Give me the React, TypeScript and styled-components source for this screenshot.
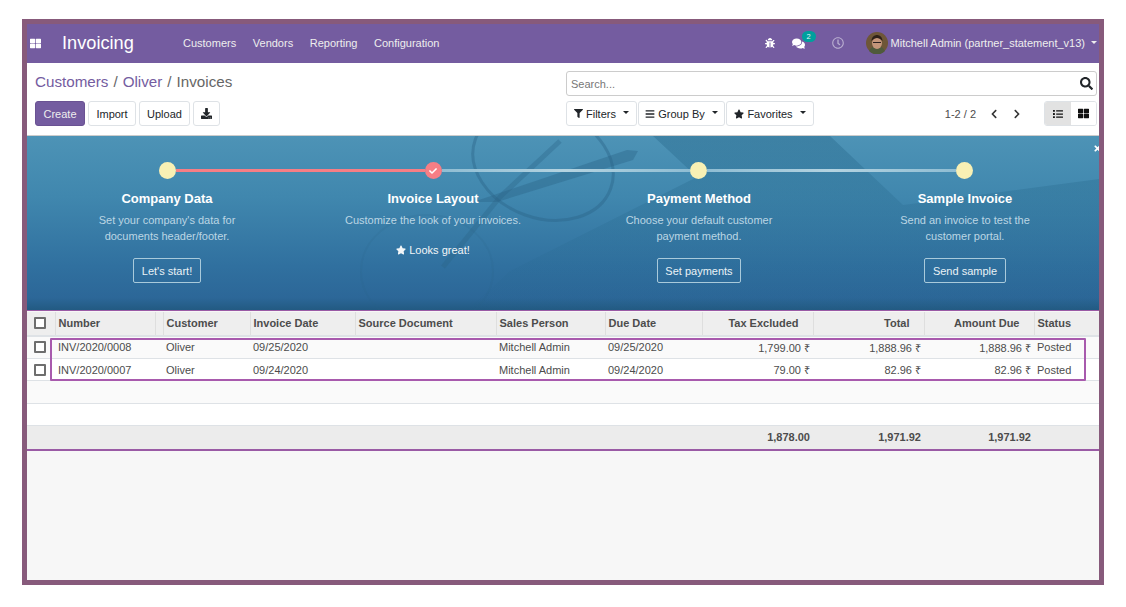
import styled, { createGlobalStyle } from 'styled-components';
import {
  FaBars, FaBug, FaChevronLeft, FaChevronRight, FaComments, FaDownload, FaFilter,
  FaList, FaRegClock, FaSearch, FaStar, FaThLarge, FaCheck, FaTimes
} from 'react-icons/fa';

// Styles
const GlobalStyle = createGlobalStyle`
  html, body {
    margin: 0;
    background: #fff;
  }
  body {
    font-family: "Liberation Sans", Arial, sans-serif;
    font-size: 11px;
    color: #4c4c4c;
  }
`;

const Page = styled.div`
  padding: 19px 22px;
  width: 1126px;
  height: 607px;
  box-sizing: border-box;
`;

const Frame = styled.div`
  width: 1082px;
  height: 566px;
  box-sizing: border-box;
  border: 5px solid #875a7b;
  background: #f7f7f7;
  display: flex;
  flex-direction: column;
  overflow: hidden;
`;

// Navbar
const Navbar = styled.div`
  height: 39px;
  flex: none;
  background: #745ca0;
  color: #fff;
  display: flex;
  align-items: center;
  padding: 0 2px 1px 3px;
  box-sizing: border-box;
`;

const AppName = styled.div`
  font-size: 18.2px;
  margin: 1px 48px 0 21px;
  width: 73px;
`;

const NavLink = styled.div`
  font-size: 11px;
  color: #eee;
  margin-right: 16.6px;
`;

const NavRight = styled.div`
  margin-left: auto;
  display: flex;
  align-items: center;
`;

const NavIcon = styled.div<{ $width: number }>`
  width: ${p => p.$width}px;
  display: flex;
  align-items: center;
  position: relative;
  color: #fff;
`;

const Badge = styled.span`
  position: absolute;
  left: 10px;
  top: -6px;
  width: 14px;
  height: 11px;
  line-height: 11px;
  border-radius: 6px;
  background: #00a09d;
  color: #e8f6f5;
  font-size: 7.500px;
  text-align: center;
`;

const Avatar = styled.svg`
  width: 22px;
  height: 22px;
  margin-right: 3px;
`;

const UserName = styled.div`
  font-size: 11px;
  color: #eee;
`;

const Caret = styled.span<{ $color?: string }>`
  display: inline-block;
  border-top: 3.5px solid ${p => p.$color || '#eee'};
  border-left: 3.5px solid transparent;
  border-right: 3.5px solid transparent;
`;

// Control panel
const ControlPanel = styled.div`
  height: 73px;
  flex: none;
  box-sizing: border-box;
  background: #fff;
  border-bottom: 1px solid #ccc;
  padding: 8px 2px 0 8px;
  display: grid;
  grid-template-columns: 531px 531px;
  grid-template-rows: 25px 25px;
  row-gap: 5px;
`;

const Breadcrumb = styled.div`
  font-size: 15.2px;
  line-height: 22px;
  color: #666;
  display: flex;
  gap: 5px;
`;

const Crumb = styled.span`
  color: #745ca0;
`;

const SearchBox = styled.div`
  border: 1px solid #ccc;
  border-radius: 3px;
  display: flex;
  align-items: center;
  justify-content: space-between;
  padding: 0 3px 0 4px;
  font-size: 11px;
  color: #212529;
`;

const SearchHint = styled.span`
  color: #777;
`;

const ButtonRow = styled.div`
  display: flex;
  gap: 3px;
`;

const Button = styled.div<{ $primary?: boolean; $width: number }>`
  width: ${p => p.$width}px;
  height: 25px;
  box-sizing: border-box;
  display: flex;
  align-items: center;
  justify-content: center;
  gap: 3px;
  border-radius: 3px;
  font-size: 11px;
  color: ${p => (p.$primary ? '#eee' : '#212529')};
  background: ${p => (p.$primary ? '#745ca0' : '#fff')};
  border: 1px solid ${p => (p.$primary ? '#6a5293' : '#dee2e6')};
`;

const SearchOptions = styled.div`
  display: flex;
  align-items: center;
`;

const FilterButton = styled(Button)`
  margin-right: 1px;
`;

const CaretGap = styled.span<{ $gap?: number }>`
  display: flex;
  margin: -2px 0 0 ${p => p.$gap || 4}px;
`;

const Pager = styled.div`
  margin-left: auto;
  display: flex;
  align-items: center;
  font-size: 11px;
  color: #4c4c4c;
`;

const PagerArrows = styled.div`
  display: flex;
  gap: 13px;
  margin: 0 22px 0 13px;
  color: #333;
`;

const ViewSwitch = styled.div`
  display: flex;
  width: 53px;
  height: 25px;
  border: 1px solid #dee2e6;
  border-radius: 3px;
  box-sizing: border-box;
  overflow: hidden;
`;

const ViewOption = styled.div<{ $active?: boolean }>`
  flex: 1;
  display: flex;
  align-items: center;
  justify-content: center;
  color: #111;
  background: ${p => (p.$active ? '#e2e2e2' : '#fff')};
`;

// Onboarding banner
const Banner = styled.div`
  position: relative;
  height: 175px;
  flex: none;
  box-sizing: border-box;
  overflow: hidden;
  border-bottom: 1px solid #9a5ba5;
  background: linear-gradient(180deg, #4d93b6 0%, #4087ae 35%, #30709f 75%, #2c6798 93%, #225a82 100%);
`;

const BannerArt = styled.svg`
  position: absolute;
  left: 0;
  top: 0;
  width: 100%;
  height: 100%;
`;

const CloseIcon = styled.div`
  position: absolute;
  right: -3px;
  top: 8px;
  color: #fff;
  font-size: 9px;
`;

const Track = styled.div`
  position: relative;
  display: flex;
  align-items: center;
  padding: 26px 126px 0 132px;
`;

const Dot = styled.div<{ $done?: boolean }>`
  width: 17px;
  height: 17px;
  flex: none;
  border-radius: 50%;
  background: ${p => (p.$done ? '#f67e85' : '#f8f0b4')};
  color: #fff;
  font-size: 8px;
  display: flex;
  align-items: center;
  justify-content: center;
`;

const Line = styled.div<{ $done?: boolean }>`
  flex: 1;
  height: 3px;
  background: ${p => (p.$done ? '#f67e85' : 'linear-gradient(90deg, #8fbdd3, #b4d3e0 50%, #8fbdd3)')};
`;

const Steps = styled.div`
  position: relative;
  display: grid;
  grid-template-columns: repeat(4, 266px);
  padding: 11px 0 0 7px;
`;

const Step = styled.div`
  display: flex;
  flex-direction: column;
  align-items: center;
  text-align: center;
`;

const StepTitle = styled.div`
  color: #fff;
  font-size: 13px;
  font-weight: 700;
  line-height: 18px;
  margin-bottom: 4px;
`;

const StepText = styled.div`
  color: #bcd6e4;
  font-size: 11px;
  line-height: 16px;
`;

const StepButton = styled.div`
  margin-top: 14px;
  height: 25px;
  box-sizing: border-box;
  padding: 0 7.500px;
  display: flex;
  align-items: center;
  border: 1px solid #a9cadb;
  border-radius: 2px;
  color: #eaf2f6;
  font-size: 11px;
`;

const Done = styled.div`
  margin-top: 15px;
  color: #f2f6f8;
  font-size: 11px;
  line-height: 14px;
  display: flex;
  align-items: center;
  gap: 3px;
`;

// List view
const ListWrap = styled.div`
  position: relative;
  margin-top: 1px;
  flex: none;
  background: #fff;
  border-bottom: 2px solid #9a5ba5;
`;

const Table = styled.table`
  width: 1072px;
  table-layout: fixed;
  border-collapse: collapse;
  font-size: 11px;
`;

const HeadCell = styled.th<{ $width: number; $right?: boolean }>`
  width: ${p => p.$width}px;
  height: 24px;
  box-sizing: border-box;
  padding: ${p => (p.$right ? '0 14px 2px 3px' : '0 3px 2px')};
  background: #eee;
  border-right: 1px solid #dedede;
  border-bottom: 2px solid #dee2e6;
  color: #4c4c4c;
  font-weight: 700;
  text-align: ${p => (p.$right ? 'right' : 'left')};
  white-space: nowrap;
`;

const Row = styled.tr<{ $odd?: boolean }>`
  height: 22.4px;
  background: ${p => (p.$odd ? '#fafafa' : '#fff')};
  border-bottom: 1px solid #dee2e6;
`;

const Cell = styled.td<{ $right?: boolean }>`
  padding: 0 3px;
  color: #4c4c4c;
  text-align: ${p => (p.$right ? 'right' : 'left')};
  white-space: nowrap;
`;

const FootRow = styled.tr`
  height: 23px;
  background: #ececec;
`;

const FootCell = styled(Cell)`
  font-weight: 700;
`;

const CheckCell = styled(Cell)`
  padding: 0 0 0 7px;
`;

const CheckBox = styled.div`
  width: 12px;
  height: 12px;
  box-sizing: border-box;
  border: 2px solid #6e6e6e;
  border-radius: 1px;
  background: #fff;
`;

const HeadCheckCell = styled(HeadCell)`
  padding-left: 7px;
`;

const Highlight = styled.div`
  position: absolute;
  left: 23px;
  top: 26px;
  width: 1036px;
  height: 43px;
  box-sizing: border-box;
  border: 2px solid #a85aad;
  border-radius: 1px;
  pointer-events: none;
`;

const Filler = styled.div`
  flex: 1;
  background: #f7f7f7;
`;

const columns = [
  { label: 'Number', width: 100 },
  { label: '', width: 8 },
  { label: 'Customer', width: 87 },
  { label: 'Invoice Date', width: 105 },
  { label: 'Source Document', width: 141 },
  { label: 'Sales Person', width: 109 },
  { label: 'Due Date', width: 97 },
  { label: 'Tax Excluded', width: 111, right: true },
  { label: 'Total', width: 111, right: true },
  { label: 'Amount Due', width: 110, right: true },
  { label: 'Status', width: 65 }
];

const invoices = [
  {
    number: 'INV/2020/0008', date: '09/25/2020', tax: '1,799.00 ₹', total: '1,888.96 ₹', due: '1,888.96 ₹'
  },
  {
    number: 'INV/2020/0007', date: '09/24/2020', tax: '79.00 ₹', total: '82.96 ₹', due: '82.96 ₹'
  }
];

const steps = [
  { title: 'Company Data', text: ["Set your company's data for", 'documents header/footer.'], action: "Let's start!" },
  { title: 'Invoice Layout', text: ['Customize the look of your invoices.'] },
  { title: 'Payment Method', text: ['Choose your default customer', 'payment method.'], action: 'Set payments' },
  { title: 'Sample Invoice', text: ['Send an invoice to test the', 'customer portal.'], action: 'Send sample' }
];

const App = () => (
  <Page>
    <GlobalStyle />
    <Frame>
      <Navbar>
        <FaThLarge size={11} />
        <AppName>Invoicing</AppName>
        <NavLink>Customers</NavLink>
        <NavLink>Vendors</NavLink>
        <NavLink>Reporting</NavLink>
        <NavLink>Configuration</NavLink>
        <NavRight>
          <NavIcon $width={27}><FaBug size={10} /></NavIcon>
          <NavIcon $width={40}>
            <FaComments size={13} />
            <Badge>2</Badge>
          </NavIcon>
          <NavIcon $width={34}><FaRegClock size={12} color='#b9aed0' /></NavIcon>
          <Avatar viewBox='0 0 22 22'>
            <circle cx='11' cy='11' r='11' fill='#6e5638' />
            <path d='M3 19c2-4 5-5 8-5s6 1 8 5a11 11 0 0 1-16 0z' fill='#4f5a3c' />
            <ellipse cx='11' cy='11' rx='5' ry='6' fill='#c4957a' />
            <path d='M5.500 9c0-4 3-6 5.500-6s5.500 2 5.500 6c-2-2-4-3-5.500-3S7.500 7 5.500 9z' fill='#2e2119' />
            <rect x='7' y='10' width='8' height='1' fill='#2a2020' />
          </Avatar>
          <UserName>Mitchell Admin (partner_statement_v13)</UserName>
          <CaretGap $gap={6}><Caret /></CaretGap>
        </NavRight>
      </Navbar>

      <ControlPanel>
        <Breadcrumb>
          <Crumb>Customers</Crumb>/<Crumb>Oliver</Crumb>/<span>Invoices</span>
        </Breadcrumb>
        <SearchBox>
          <SearchHint>Search...</SearchHint>
          <FaSearch size={13} />
        </SearchBox>
        <ButtonRow>
          <Button $primary $width={50}>Create</Button>
          <Button $width={48}>Import</Button>
          <Button $width={51}>Upload</Button>
          <Button $width={27}><FaDownload size={11} /></Button>
        </ButtonRow>
        <SearchOptions>
          <FilterButton $width={71}>
            <FaFilter size={9} />Filters<CaretGap><Caret $color='#212529' /></CaretGap>
          </FilterButton>
          <FilterButton $width={87}>
            <FaBars size={10} />Group By<CaretGap><Caret $color='#212529' /></CaretGap>
          </FilterButton>
          <FilterButton $width={88}>
            <FaStar size={10} />Favorites<CaretGap><Caret $color='#212529' /></CaretGap>
          </FilterButton>
          <Pager>
            1-2 / 2
            <PagerArrows>
              <FaChevronLeft size={10} />
              <FaChevronRight size={10} />
            </PagerArrows>
          </Pager>
          <ViewSwitch>
            <ViewOption $active><FaList size={10} /></ViewOption>
            <ViewOption><FaThLarge size={11} /></ViewOption>
          </ViewSwitch>
        </SearchOptions>
      </ControlPanel>

      <Banner>
        <BannerArt viewBox='0 0 1072 174' preserveAspectRatio='none'>
          <defs>
            <linearGradient id='wedge' x1='0' y1='0' x2='0' y2='1'>
              <stop offset='0' stopColor='#1f5f82' stopOpacity='.34' />
              <stop offset='.7' stopColor='#1f5f82' stopOpacity='.1' />
              <stop offset='1' stopColor='#1f5f82' stopOpacity='.03' />
            </linearGradient>
          </defs>
          <path d='M626 0H803L876 69 1072 43V174H440L483 135 670 41z' fill='url(#wedge)' />
          <g fill='none' stroke='#2a6488'>
            <ellipse cx='516' cy='28' rx='72' ry='54' transform='rotate(20 516 28)' strokeWidth='3' opacity='.42' />
            <ellipse cx='400' cy='135' rx='66' ry='56' strokeWidth='2' opacity='.14' />
            <path d='M533 5L473 61 416 131' strokeWidth='5' opacity='.35' />
          </g>
          <path d='M446 66L600 14 611 15 606 24 470 66z' fill='#2a6488' opacity='.4' />
        </BannerArt>
        <CloseIcon><FaTimes /></CloseIcon>
        <Track>
          <Dot />
          <Line $done />
          <Dot $done><FaCheck /></Dot>
          <Line />
          <Dot />
          <Line />
          <Dot />
        </Track>
        <Steps>
          {steps.map(step => (
            <Step key={step.title}>
              <StepTitle>{step.title}</StepTitle>
              {step.text.map(line => <StepText key={line}>{line}</StepText>)}
              {step.action
                ? <StepButton>{step.action}</StepButton>
                : <Done><FaStar size={10} /> Looks great!</Done>
              }
            </Step>
          ))}
        </Steps>
      </Banner>

      <ListWrap>
        <Table>
          <thead>
            <tr>
              <HeadCheckCell $width={28}><CheckBox /></HeadCheckCell>
              {columns.map((col, i) => (
                <HeadCell key={i} $width={col.width} $right={col.right}>{col.label}</HeadCell>
              ))}
            </tr>
          </thead>
          <tbody>
            {invoices.map((inv, i) => (
              <Row key={inv.number} $odd={i === 0}>
                <CheckCell><CheckBox /></CheckCell>
                <Cell>{inv.number}</Cell>
                <Cell />
                <Cell>Oliver</Cell>
                <Cell>{inv.date}</Cell>
                <Cell />
                <Cell>Mitchell Admin</Cell>
                <Cell>{inv.date}</Cell>
                <Cell $right>{inv.tax}</Cell>
                <Cell $right>{inv.total}</Cell>
                <Cell $right>{inv.due}</Cell>
                <Cell>Posted</Cell>
              </Row>
            ))}
            <Row $odd><Cell colSpan={12} /></Row>
            <Row><Cell colSpan={12} /></Row>
            <FootRow>
              <FootCell colSpan={8} />
              <FootCell $right>1,878.00</FootCell>
              <FootCell $right>1,971.92</FootCell>
              <FootCell $right>1,971.92</FootCell>
              <FootCell />
            </FootRow>
          </tbody>
        </Table>
        <Highlight />
      </ListWrap>
      <Filler />
    </Frame>
  </Page>
);

export default App;
